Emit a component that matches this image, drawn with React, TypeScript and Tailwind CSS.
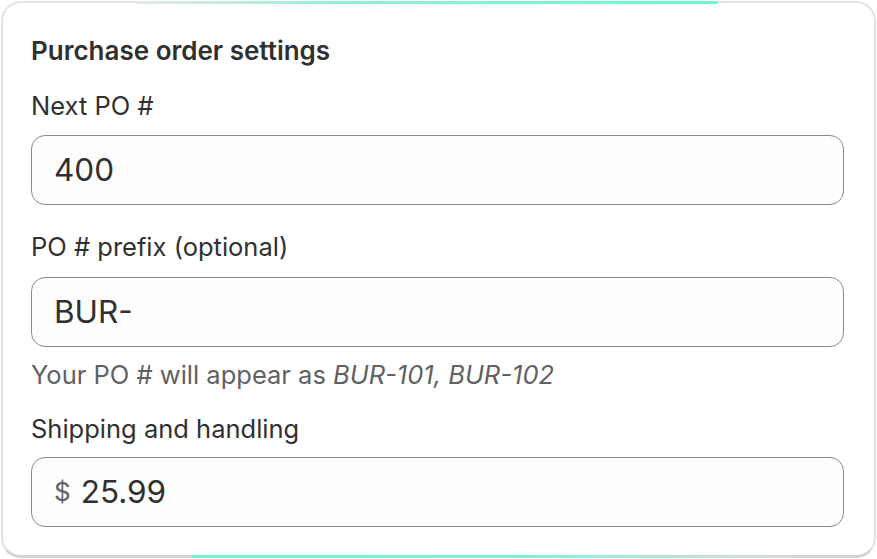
import React from "react";

export default function App() {
  const inputCls =
    "flex items-center h-[70px] rounded-[14px] border border-[#8a8a8a] bg-[#fdfdfd] px-[22px] text-[31.5px] text-[#303030] leading-none";
  const labelCls = "text-[25.5px] leading-[32px] text-[#303030]";
  return (
    <div className="w-[877px] h-[559px] bg-white p-[1px]" style={{ fontFamily: "Inter, 'Noto Sans', sans-serif" }}>
      <div className="relative w-full h-full rounded-[20px] border-2 border-[#e3e3e3] border-b-[3px] border-b-[#d4d4d4] bg-white pl-[28px] pr-[30px] pt-[32px] flex flex-col">
        <div className="absolute -top-[2px] left-[132px] w-[583px] h-[3px] bg-gradient-to-r from-[#e6e6e6] via-[#8df0da] via-35% to-[#74f2d6]" />
        <div className="absolute -bottom-[3px] left-[188px] w-[600px] h-[3px] bg-gradient-to-r from-[#74f2d6] via-[#80f0d8] via-55% to-[#d8d8d8]" />
        <div className="text-[26px] leading-[32px] font-semibold text-[#303030]">Purchase order settings</div>
        <div className={`${labelCls} mt-[23px]`}>Next PO #</div>
        <div className={`${inputCls} mt-[13px]`}>400</div>
        <div className={`${labelCls} mt-[26px]`}>PO # prefix (optional)</div>
        <div className={`${inputCls} mt-[14px]`}>BUR-</div>
        <div className="mt-[12px] text-[25.5px] leading-[32px] text-[#616161]">
          Your PO # will appear as <span className="italic">BUR-101, BUR-102</span>
        </div>
        <div className={`${labelCls} mt-[22px]`}>Shipping and handling</div>
        <div className={`${inputCls} mt-[12px]`}>
          <span className="text-[26px] text-[#616161] mr-[10px]">$</span>
          <span>25.99</span>
        </div>
      </div>
    </div>
  );
}
